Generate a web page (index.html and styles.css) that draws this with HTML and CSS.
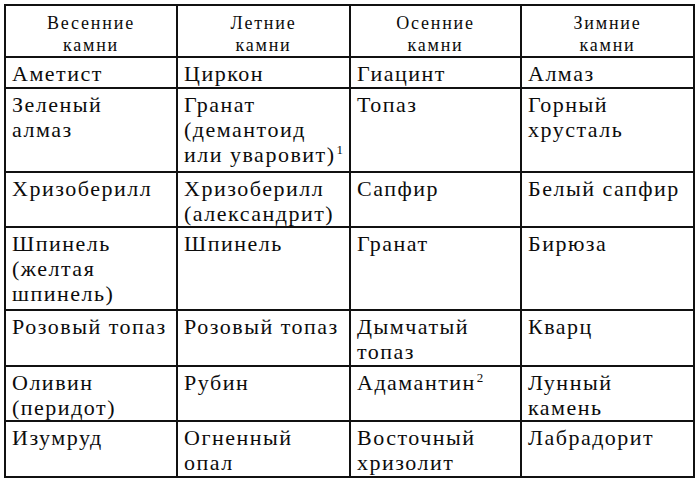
FILE: index.html
```html
<!DOCTYPE html>
<html lang="ru">
<head>
<meta charset="utf-8">
<link rel="stylesheet" href="styles.css">
</head>
<body>
<table class="stones">
  <colgroup>
    <col class="c1"><col class="c2"><col class="c3"><col class="c4">
  </colgroup>
  <thead>
    <tr class="head">
      <th>Весенние<br>камни</th>
      <th>Летние<br>камни</th>
      <th>Осенние<br>камни</th>
      <th>Зимние<br>камни</th>
    </tr>
  </thead>
  <tbody>
    <tr class="h1"><td>Аметист</td><td>Циркон</td><td>Гиацинт</td><td>Алмаз</td></tr>
    <tr class="h3"><td>Зеленый<br>алмаз</td><td>Гранат<br>(демантоид<br>или уваровит)<sup>1</sup></td><td>Топаз</td><td>Горный<br>хрусталь</td></tr>
    <tr class="h2"><td>Хризоберилл</td><td>Хризоберилл<br>(александрит)</td><td>Сапфир</td><td>Белый сапфир</td></tr>
    <tr class="h3"><td>Шпинель<br>(желтая<br>шпинель)</td><td>Шпинель</td><td>Гранат</td><td>Бирюза</td></tr>
    <tr class="h2b"><td>Розовый топаз</td><td>Розовый топаз</td><td>Дымчатый<br>топаз</td><td>Кварц</td></tr>
    <tr class="h2"><td>Оливин<br>(перидот)</td><td>Рубин</td><td>Адамантин<sup>2</sup></td><td>Лунный<br>камень</td></tr>
    <tr class="h2b"><td>Изумруд</td><td>Огненный<br>опал</td><td>Восточный<br>хризолит</td><td>Лабрадорит</td></tr>
  </tbody>
</table>
</body>
</html>
```
FILE: styles.css
```css
html, body {
  margin: 0;
  padding: 0;
  background: #fff;
}
body {
  padding: 4px 0 0 4px;
  font-family: "Liberation Serif", "Times New Roman", serif;
  color: #0c0c0c;
}
.stones {
  border-collapse: collapse;
  table-layout: fixed;
  width: 689px;
}
.c1 { width: 172px; }
.c2 { width: 173px; }
.c3 { width: 171px; }
.c4 { width: 173px; }
.stones th,
.stones td {
  border: 2px solid #111;
  vertical-align: top;
  text-align: left;
  white-space: nowrap;
}
.stones th {
  font-weight: normal;
  text-align: center;
  font-size: 18px;
  letter-spacing: 1.8px;
  line-height: 22px;
  padding: 6px 2px 0;
}
.stones td {
  font-size: 22px;
  letter-spacing: 1.5px;
  line-height: 25px;
  padding: 3px 2px 0 6px;
}
.h1 { height: 31px; }
.h2 { height: 55px; }
.h2b { height: 56px; }
.h3 { height: 83.5px; }
.stones sup {
  font-size: 13px;
  letter-spacing: 0;
  line-height: 0;
  vertical-align: 8px;
  margin-left: 1px;
}
```
